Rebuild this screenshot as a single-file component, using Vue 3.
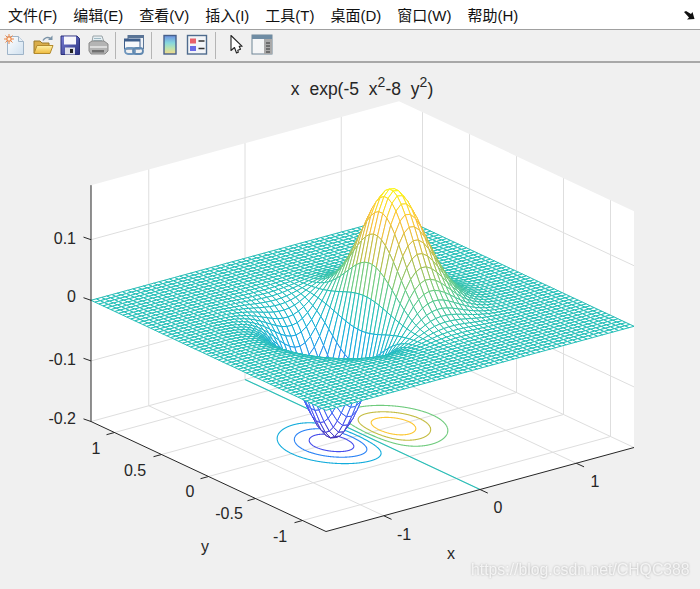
<script setup>
const menus = ['文件(F)', '编辑(E)', '查看(V)', '插入(I)', '工具(T)', '桌面(D)', '窗口(W)', '帮助(H)']

const XL = 1.6
const YL = 1.25
const NX = 59
const NY = 59
const ZMIN = -0.2
const ZTOP = 0.19

const project = (x, y, z) => [
  362.5 + 96.25 * x - 94 * y,
  434.5 - 26.25 * x - 44 * y - 606 * (z - ZMIN)
]
const pt = (x, y, z) => project(x, y, z).map(v => v.toFixed(2)).join(' ')
const f = (x, y) => x * Math.exp(-5 * x * x - 8 * y * y)

const stops = [
  [0.2422, 0.1504, 0.6603],
  [0.281, 0.3228, 0.9579],
  [0.16, 0.53, 0.96],
  [0.07, 0.68, 0.86],
  [0.14, 0.75, 0.72],
  [0.42, 0.8, 0.5],
  [0.75, 0.74, 0.27],
  [0.99, 0.75, 0.22],
  [0.98, 0.98, 0.05]
]
function parula(z) {
  const t = Math.min(0.9999, Math.max(0, (z + 0.192) / 0.384)) * 8
  const i = Math.floor(t)
  const c = stops[i].map((v, k) => v + (stops[i + 1][k] - v) * (t - i))
  return `rgb(${c.map(v => Math.round(v * 255)).join(',')})`
}

// back wall and floor grid
const xTicks = [-1, 0, 1]
const yTicks = [-1, -0.5, 0, 0.5, 1]
const zTicks = [-0.2, -0.1, 0, 0.1]
const grid = []
const seg = (a, b) => `M${pt(...a)}L${pt(...b)}`
xTicks.forEach(x => {
  grid.push(seg([x, -YL, ZMIN], [x, YL, ZMIN]))
  grid.push(seg([x, YL, ZMIN], [x, YL, ZTOP]))
})
yTicks.forEach(y => {
  grid.push(seg([-XL, y, ZMIN], [XL, y, ZMIN]))
  grid.push(seg([XL, y, ZMIN], [XL, y, ZTOP]))
})
zTicks.forEach(z => {
  grid.push(seg([-XL, YL, z], [XL, YL, z]))
  grid.push(seg([XL, -YL, z], [XL, YL, z]))
})
const gridPath = grid.join('')

const wall = [
  [-XL, YL, ZTOP], [XL, YL, ZTOP], [XL, -YL, ZTOP], [XL, -YL, ZMIN], [-XL, -YL, ZMIN], [-XL, YL, ZMIN]
].map(p => pt(...p)).join(' ')

// axis lines and ticks
const axisPath = [
  seg([-XL, YL, ZTOP], [-XL, YL, ZMIN]),
  seg([-XL, YL, ZMIN], [-XL, -YL, ZMIN]),
  seg([-XL, -YL, ZMIN], [XL, -YL, ZMIN]),
  ...xTicks.map(x => {
    const [a, b] = project(x, -YL, ZMIN)
    return `M${a} ${b}l7.8 3.6`
  }),
  ...yTicks.map(y => {
    const [a, b] = project(-XL, y, ZMIN)
    return `M${a} ${b}l-8 2.2`
  }),
  ...zTicks.map(z => {
    const [a, b] = project(-XL, YL, z)
    return `M${a} ${b}l-7.5 -2.6`
  })
].join('')

// contours on the floor, x as parameter since y^2 has a closed form
function contour(c) {
  const upper = []
  const lower = []
  for (let i = 1; i < 1600; i++) {
    const x = Math.sign(c) * i * 0.001
    const yy = (Math.log(x / c) - 5 * x * x) / 8
    if (yy < 0) continue
    const y = Math.sqrt(yy)
    upper.push(pt(x, y, ZMIN))
    lower.unshift(pt(x, -y, ZMIN))
  }
  return 'M' + upper.concat(lower).join('L') + 'Z'
}
const contours = [-0.15, -0.1, -0.05, 0.05, 0.1, 0.15].map(c => ({ c, d: contour(c), color: parula(c) }))
const zeroLine = { d: seg([0, -YL, ZMIN], [0, YL, ZMIN]), color: parula(0) }

// mesh quads, far corner first so nearer ones paint over
const dx = 2 * XL / NX
const dy = 2 * YL / NY
const quads = []
for (let i = NX - 1; i >= 0; i--) {
  for (let j = NY - 1; j >= 0; j--) {
    const x0 = -XL + i * dx
    const x1 = x0 + dx
    const y0 = -YL + j * dy
    const y1 = y0 + dy
    const a = f(x0, y0)
    const b = f(x1, y0)
    const c = f(x1, y1)
    const d = f(x0, y1)
    quads.push({
      key: i * 1000 + j,
      d: `M${pt(x0, y0, a)}L${pt(x1, y0, b)}L${pt(x1, y1, c)}L${pt(x0, y1, d)}Z`,
      color: parula((a + b + c + d) / 4)
    })
  }
}

const labels = [
  { t: '1', x: 96, y: 454 }, { t: '0.5', x: 135, y: 476 }, { t: '0', x: 190, y: 497 },
  { t: '-0.5', x: 229, y: 519 }, { t: '-1', x: 280, y: 542 },
  { t: '-1', x: 404, y: 540 }, { t: '0', x: 498, y: 513 }, { t: '1', x: 595, y: 487 },
  { t: 'x', x: 451, y: 559 }, { t: 'y', x: 205, y: 552 }
]
const zLabels = [
  { t: '0.1', y: 244 }, { t: '0', y: 302 }, { t: '-0.1', y: 365 }, { t: '-0.2', y: 424 }
]
</script>

<template>
  <div class="figure">
    <div class="menubar">
      <span v-for="m in menus" :key="m" class="menu">{{ m }}</span>
      <svg class="undock" width="14" height="12" viewBox="0 0 14 12">
        <path d="M1 2l2-1 5 3 1.500-2 2 7-7.500 .5 2-2z" fill="#111" />
      </svg>
    </div>

    <div class="toolbar">
      <div class="group first">
        <svg class="icon" viewBox="0 0 22 22">
          <defs>
            <linearGradient id="page" x1="0" y1="0" x2="1" y2="1">
              <stop offset="0" stop-color="#ffffff" />
              <stop offset="1" stop-color="#cfe0ef" />
            </linearGradient>
          </defs>
          <path d="M3.500 2.500h11l5 5v13h-16z" fill="url(#page)" stroke="#9fb4c8" />
          <path d="M14.500 2.500v5h5" fill="#e6eef6" stroke="#9fb4c8" />
          <circle cx="5" cy="5" r="2.800" fill="#f09a6a" />
          <path d="M5 0v10M0 5h10M1.500 1.500l7 7M8.500 1.500l-7 7" stroke="#e8884a" stroke-width="1" />
          <circle cx="5" cy="5" r="1.500" fill="#fff0d8" />
        </svg>
        <svg class="icon" viewBox="0 0 22 22">
          <defs>
            <linearGradient id="folder" x1="0" y1="0" x2="0" y2="1">
              <stop offset="0" stop-color="#fff3a8" />
              <stop offset="1" stop-color="#eeb93c" />
            </linearGradient>
          </defs>
          <path d="M2 19V7h6l2 2h7v10z" fill="#d9ad4a" stroke="#9a7a2a" />
          <path d="M2 19.500l3-8h16l-3 8z" fill="url(#folder)" stroke="#b38a2c" />
          <path d="M11 6.500c1.500-3 5-4 7.500-2" fill="none" stroke="#7b93a8" stroke-width="1.500" />
          <path d="M20.500 1.500v4.500h-4.500z" fill="#7b93a8" />
        </svg>
        <svg class="icon" viewBox="0 0 22 22">
          <defs>
            <linearGradient id="disk" x1="0" y1="0" x2="1" y2="1">
              <stop offset="0" stop-color="#7a7fd6" />
              <stop offset="1" stop-color="#27307f" />
            </linearGradient>
          </defs>
          <path d="M2 2h16l2.500 2.500V20.500H2z" fill="url(#disk)" stroke="#2a2f78" />
          <rect x="5" y="2.500" width="12" height="8" fill="#f6f6fb" />
          <rect x="6" y="13.500" width="10" height="7" fill="#dfe1ec" />
          <rect x="11" y="15" width="3" height="4" fill="#222" />
        </svg>
        <svg class="icon" viewBox="0 0 22 22">
          <path d="M6 2h9l2 6H5z" fill="#e6eef2" stroke="#9aa4a8" />
          <path d="M7 4.500h7M6.500 6.500h8.500" stroke="#9db8c2" />
          <path d="M2 9l3-2h12l4 3v7l-3 3H4l-2-3z" fill="#b4b4b4" stroke="#8a8a8a" />
          <path d="M3 12h17v2H3z" fill="#dcdcdc" />
          <rect x="5" y="16" width="12" height="2.500" fill="#707070" />
        </svg>
      </div>
      <i class="sep" />
      <div class="group">
        <svg class="icon" viewBox="0 0 22 22">
          <rect x="5" y="1.500" width="15.500" height="13" fill="#eef2f7" stroke="#5b7596" />
          <rect x="5" y="1.500" width="15.500" height="2.500" fill="#5b7596" />
          <rect x="1.500" y="5" width="15.500" height="10" fill="#f6f8fb" stroke="#3f5f8c" />
          <rect x="1.500" y="5" width="15.500" height="2.500" fill="#3f5f8c" />
          <rect x="2" y="14" width="10" height="6" rx="3" fill="none" stroke="#6f96bd" stroke-width="1.800" />
          <rect x="10" y="14" width="10" height="6" rx="3" fill="none" stroke="#6088b0" stroke-width="1.800" />
        </svg>
      </div>
      <i class="sep" />
      <div class="group">
        <svg class="icon" viewBox="0 0 22 22">
          <defs>
            <linearGradient id="bar" x1="0" y1="0" x2="0" y2="1">
              <stop offset="0" stop-color="#6d8fe0" />
              <stop offset="0.4" stop-color="#86d8de" />
              <stop offset="0.7" stop-color="#bde3ae" />
              <stop offset="1" stop-color="#f6d98a" />
            </linearGradient>
          </defs>
          <rect x="5" y="1.500" width="12" height="18.500" fill="url(#bar)" stroke="#47608a" stroke-width="1.400" />
        </svg>
        <svg class="icon" viewBox="0 0 22 22">
          <rect x="1.500" y="1.500" width="19" height="18.500" fill="#f3f5f8" stroke="#4f6c8e" stroke-width="1.400" />
          <rect x="4" y="4.500" width="6" height="5" fill="#e8606a" />
          <rect x="4" y="12" width="6" height="5" fill="#6a6ae6" />
          <path d="M12.500 7h6M12.500 14.500h6" stroke="#333" stroke-width="1.400" />
        </svg>
      </div>
      <i class="sep" />
      <div class="group last">
        <svg class="icon" viewBox="0 0 22 22">
          <path d="M6 1.500v15l3.500-3 2 5.500 1.800-.7-.5-2 2.700-1-1.300-3h3z" fill="#fff" stroke="#222" stroke-width="1.100" stroke-linejoin="round" />
        </svg>
        <svg class="icon" viewBox="0 0 22 22">
          <rect x="1" y="1" width="20" height="19" fill="#f5f6f7" stroke="#6f8596" />
          <rect x="1" y="1" width="20" height="4" fill="#6f8ca3" />
          <rect x="13" y="5" width="8" height="15" fill="#a9a9a9" />
          <path d="M15 9h4M15 12h4M15 15h4M15 18h4" stroke="#333" />
        </svg>
      </div>
    </div>

    <svg class="plot" width="700" height="526" viewBox="0 63 700 526">
      <polygon :points="wall" fill="#fff" />
      <path :d="gridPath" class="grid" />
      <path :d="zeroLine.d" :stroke="zeroLine.color" class="level" />
      <path v-for="l in contours" :key="l.c" :d="l.d" :stroke="l.color" class="level" />
      <path v-for="q in quads" :key="q.key" :d="q.d" :stroke="q.color" class="quad" />
      <path :d="axisPath" class="axis" />

      <text x="362" y="95" class="label title" text-anchor="middle">x exp(-5 x<tspan class="sup" dy="-8">2</tspan><tspan dy="8">-8 y</tspan><tspan class="sup" dy="-8">2</tspan><tspan dy="8">)</tspan></text>
      <text v-for="l in labels" :key="l.t + l.x" :x="l.x" :y="l.y" class="label" text-anchor="middle">{{ l.t }}</text>
      <text v-for="l in zLabels" :key="l.t" x="76" :y="l.y" class="label" text-anchor="end">{{ l.t }}</text>
      <text x="471" y="575" class="mark">https://blog.csdn.net/CHQC388</text>
    </svg>
  </div>
</template>

<style scoped>
.figure {
  width: 700px;
  height: 589px;
  overflow: hidden;
  background: #f0f0f0;
  font-family: "Liberation Sans", "Noto Sans CJK SC", sans-serif;
}

.menubar {
  display: flex;
  align-items: center;
  height: 30px;
  padding-left: 8px;
  background: #fff;
  border-bottom: 1px solid #a0a0a0;
  box-sizing: border-box;
  font-size: 15px;
  color: #111;
}

.menu {
  margin-right: 16px;
  white-space: nowrap;
}

.undock {
  margin-left: auto;
  margin-right: 3px;
  margin-top: 2px;
}

.toolbar {
  display: flex;
  align-items: center;
  height: 33px;
  background: #f0f0f0;
  border-bottom: 2px solid #a8a8a8;
  box-sizing: border-box;
  padding-bottom: 1px;
}

.group {
  display: flex;
  gap: 5.5px;
  padding: 0 6.5px;
}

.group.first {
  padding-left: 4px;
}

.group.last {
  gap: 4px;
  padding-left: 9px;
}

.icon {
  width: 22px;
  height: 22px;
  flex: none;
}

.sep {
  width: 1px;
  height: 27px;
  background: #b5b5b5;
}

.plot {
  display: block;
}

.grid {
  fill: none;
  stroke: #dedede;
  stroke-width: 1;
}

.level {
  fill: none;
  stroke-width: 1.1;
}

.quad {
  fill: #fff;
  stroke-width: 1;
}

.axis {
  fill: none;
  stroke: #262626;
  stroke-width: 1;
}

.label {
  font-size: 16px;
  fill: #262626;
}

.title {
  font-size: 17.5px;
  word-spacing: 5px;
}

.sup {
  font-size: 14px;
}

.mark {
  font-size: 15.8px;
  fill: rgba(255, 255, 255, 0.75);
  filter: drop-shadow(0 0 1px rgba(0, 0, 0, 0.35));
}
</style>
